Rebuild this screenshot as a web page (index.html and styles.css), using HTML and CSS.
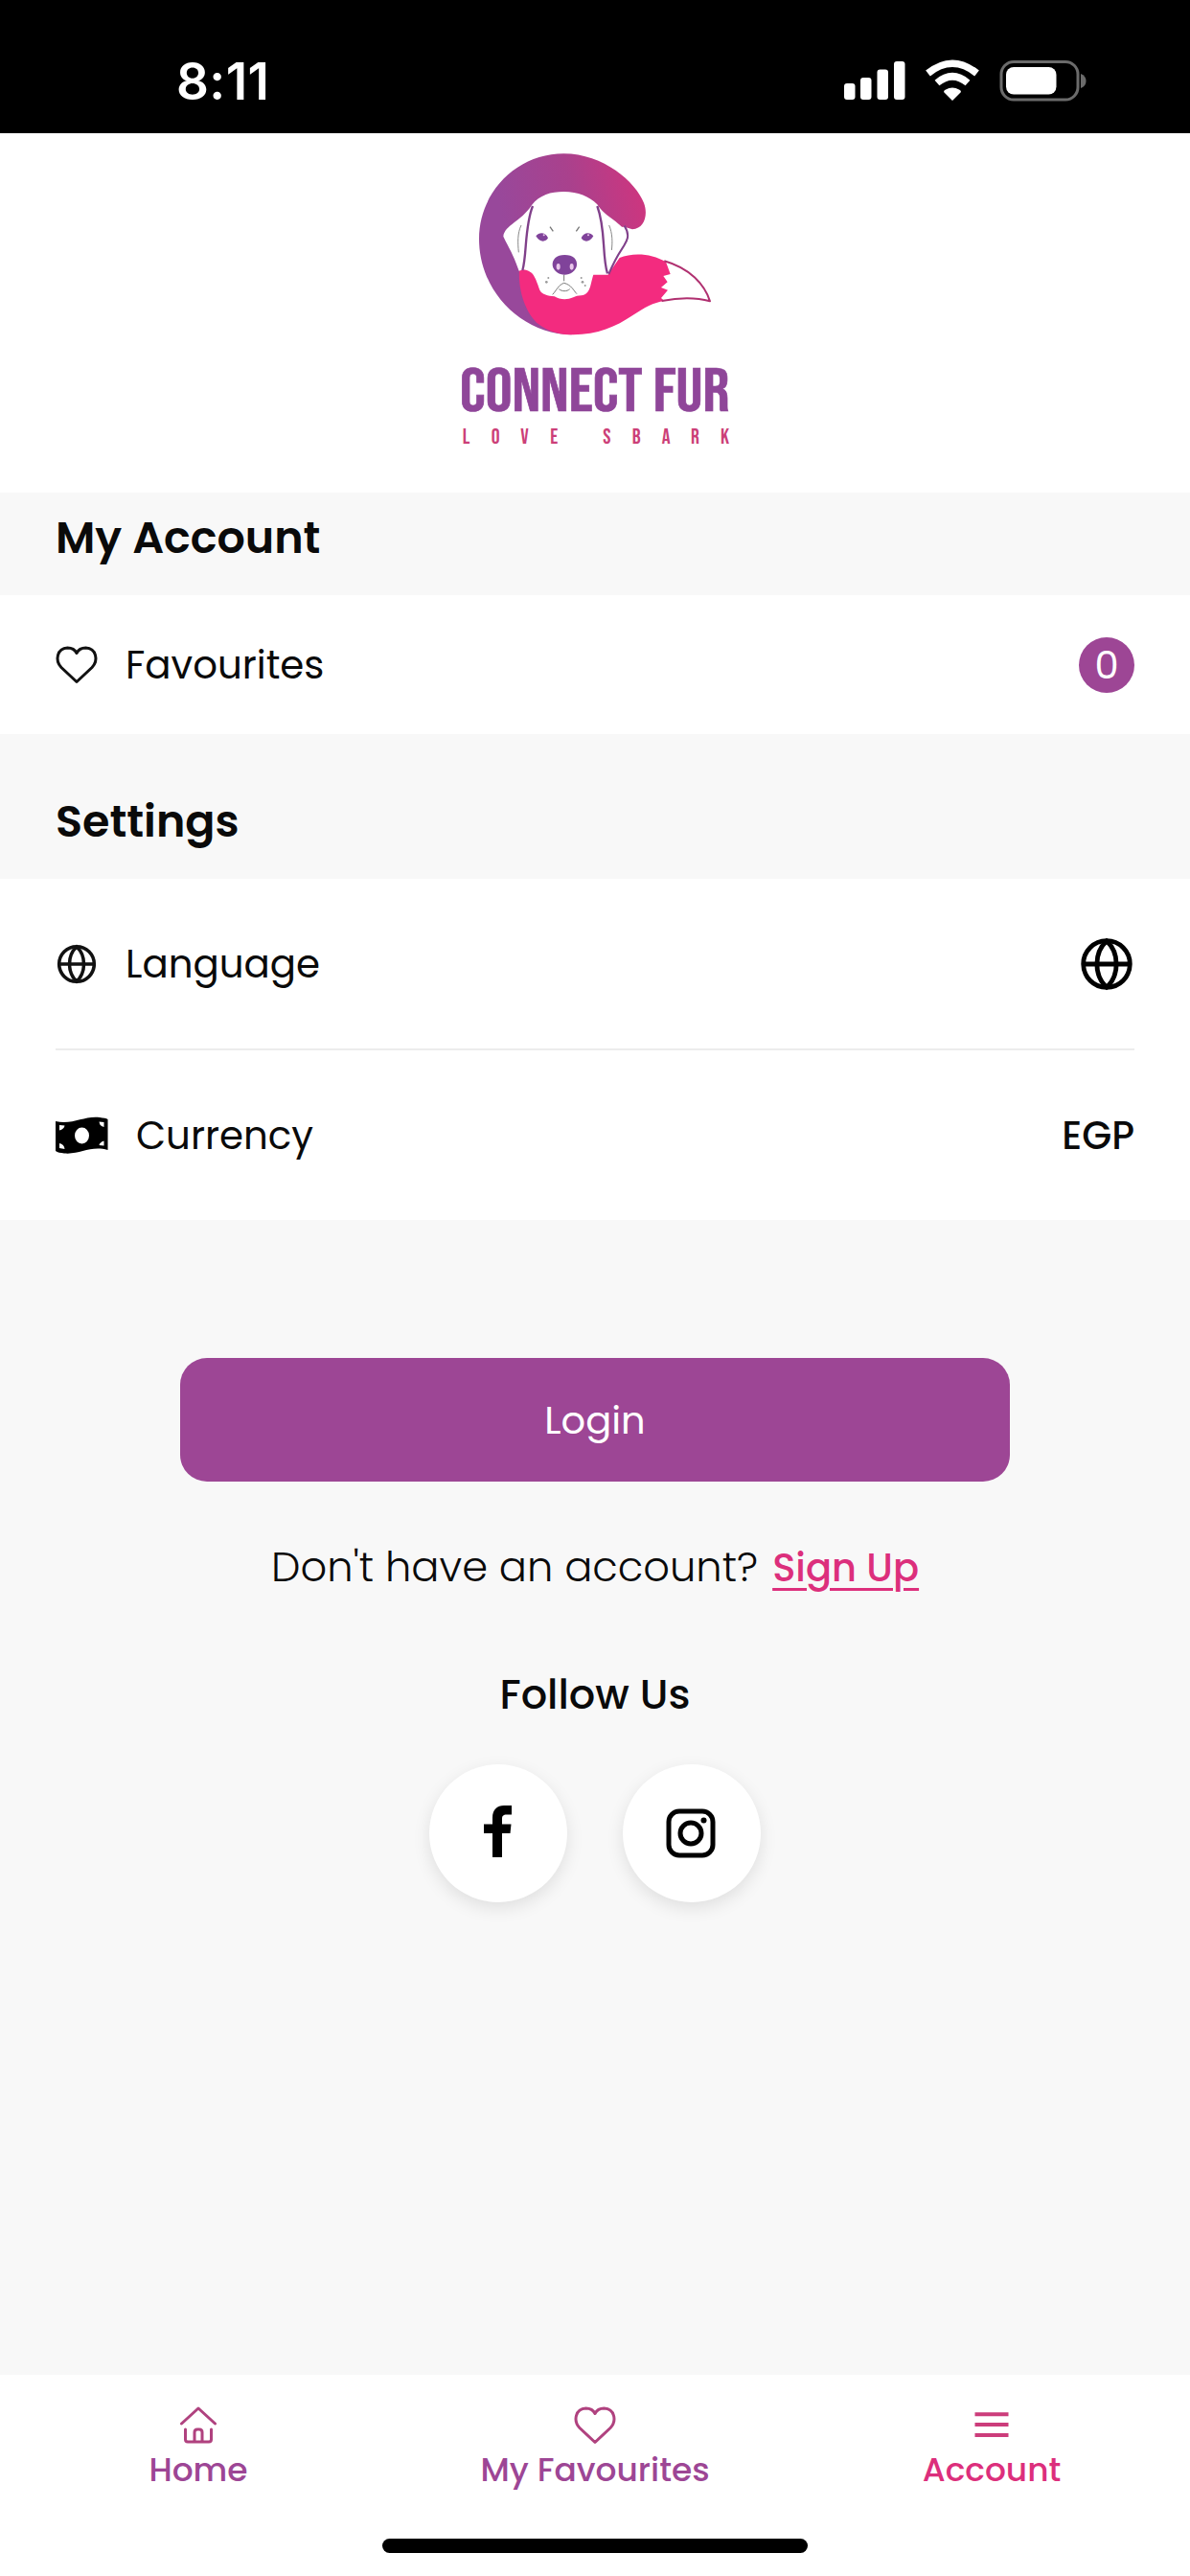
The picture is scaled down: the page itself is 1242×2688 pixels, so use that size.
FILE: index.html
```html
<!DOCTYPE html>
<html lang="en">
<head>
    <meta charset="UTF-8">
    <meta name="viewport" content="width=device-width, initial-scale=1.0">
    <title>Connect Fur</title>
    <link rel="stylesheet" href="styles.css">
</head>
<body>

    <div class="status-bar">
        <span class="time">8:11</span>
        <svg class="status-icons" viewBox="0 0 256 44" width="256" height="44">
            <g fill="#fff">
                <rect x="0" y="24" width="11.500" height="17" rx="3"/>
                <rect x="17" y="18" width="11.500" height="23" rx="3"/>
                <rect x="34.500" y="9.500" width="11.500" height="31.500" rx="3"/>
                <rect x="52" y="1" width="11.500" height="40" rx="3"/>
                <path d="M113 42 L104 33 Q104 31 106 30.500 Q113 26.500 120 30.500 Q122 31 122 33 Z"/>
            </g>
            <path d="M87.500 13.500 Q113 -7 138.500 13.500" fill="none" stroke="#fff" stroke-width="7.500"/>
            <path d="M97 23.500 Q113 10 129 23.500" fill="none" stroke="#fff" stroke-width="7.500"/>
            <rect x="164" y="1.500" width="80" height="39.500" rx="13" fill="none" stroke="#6b6b6b" stroke-width="3"/>
            <rect x="169" y="7" width="52.500" height="28.500" rx="8" fill="#fff"/>
            <path d="M247 14 Q252.500 16 252.500 21.500 Q252.500 27 247 29 Z" fill="#6b6b6b"/>
        </svg>
    </div>

    <div class="logo">
        <svg viewBox="0 0 960 1020" width="320" height="340">
            <defs>
                <linearGradient id="fur" gradientUnits="userSpaceOnUse" x1="200" y1="300" x2="650" y2="200">
                    <stop offset="0" stop-color="#98489b"/>
                    <stop offset="0.5" stop-color="#a9418d"/>
                    <stop offset="1" stop-color="#cf357e"/>
                </linearGradient>
            </defs>
            <path fill="url(#fur)" d="M600 298 C638 296 650 252 636 215 C610 150 510 61 385 61 C240 61 120 180 120 328 C120 490 250 625 410 628 L300 450 L300 300 L575 290 Z"/>
            <path fill="#f32b7f" d="M246 424 C242 500 270 560 300 590 C340 622 380 628 415 628 C490 628 550 602 600 568 C640 541 665 528 700 522 L690 513 L711 488 L690 480 L710 463 L697 444 L719 438 L705 400 C660 372 600 370 560 387 L530 430 L400 400 Z"/>
            <path d="M700 397 C780 420 826 470 843 523 C795 510 745 512 692 522" fill="none" stroke="#b03070" stroke-width="6" stroke-linejoin="round"/>
            <!-- dog face -->
            <path fill="#fff" d="M385 180 C430 180 465 195 490 220 C515 262 570 275 586 320 C583 350 545 380 524 440 L478 440 C468 470 470 500 440 505 C430 505 422 507 415 511 C395 520 372 518 356 508 C335 505 318 503 310 488 C295 445 290 428 258 424 L245 428 C228 378 210 350 196 320 C200 285 250 275 285 222 C310 190 345 180 385 180 Z"/>
            <g fill="none" stroke="#80408a" stroke-width="7">
                <path d="M575 287 C595 318 583 335 568 358 C550 385 540 405 526 438" stroke-width="6"/>
                <path d="M288 225 C262 290 270 380 256 426"/>
                <path d="M490 225 C518 300 504 380 522 436"/>
                <path d="M252 285 C240 310 241 340 244 370 M527 285 C538 310 538 340 535 363" stroke="#888" stroke-width="3"/>
                <path d="M342 290 L352 304 M434 290 L424 304" stroke="#777" stroke-width="4"/>
                <path d="M386 440 L386 460 M386 466 C368 472 362 490 350 502 M386 466 C410 472 416 490 426 500 M370 485 C380 493 395 493 404 485" stroke="#777" stroke-width="3"/>
            </g>
            <g fill="#80439a">
                <path d="M298 319 C308 306 328 306 336 325 C328 340 308 338 298 319 Z"/>
                <path d="M478 319 C468 306 448 306 440 325 C448 340 468 338 478 319 Z"/>
                <path d="M388 378 C415 378 428 392 426 410 C424 428 405 440 388 440 C371 440 352 428 350 410 C349 392 362 378 388 378 Z"/>
            </g>
            <g fill="#e9c6ea">
                <ellipse cx="368" cy="415" rx="6" ry="10"/>
                <ellipse cx="410" cy="415" rx="6" ry="10"/>
                <circle cx="323" cy="316" r="3"/>
                <circle cx="462" cy="316" r="3"/>
            </g>
            <g fill="#999">
                <circle cx="337" cy="450" r="3"/><circle cx="331" cy="463" r="4"/>
                <circle cx="440" cy="450" r="3"/><circle cx="444" cy="463" r="4"/><circle cx="452" cy="474" r="3"/>
            </g>
            <text class="brand" x="60" y="866" textLength="844" lengthAdjust="spacingAndGlyphs">CONNECT FUR</text>
            <text class="tagline" y="970" x="68 158 250 343 508 599 692 783 876">LOVESBARK</text>
        </svg>
    </div>

    <h2 class="section-title account-title">My Account</h2>
    <div class="row row-favourites">
        <svg class="icon" viewBox="0 0 44 40" width="44" height="40">
            <path d="M22 37.500 L6 22.500 C-1 15 1.500 2.500 12.500 2 C17 2 20.500 4.500 22 7.500 C23.500 4.500 27 2 31.500 2 C42.500 2.500 45 15 38 22.500 Z" fill="none" stroke="#111" stroke-width="3" stroke-linejoin="round"/>
        </svg>
        <span class="label">Favourites</span>
        <span class="badge">0</span>
    </div>

    <h2 class="section-title settings-title">Settings</h2>
    <div class="settings">
        <div class="row row-language">
            <svg class="icon" viewBox="0 0 44 44" width="44" height="44">
                <g fill="none" stroke="#111" stroke-width="3.600">
                    <circle cx="22" cy="22" r="18.300"/>
                    <path d="M4 22 H40 M22 4 C12 13 12 31 22 40 C32 31 32 13 22 4 Z"/>
                </g>
            </svg>
            <span class="label">Language</span>
            <svg class="globe" viewBox="0 0 54 54" width="54" height="54">
                <g fill="none" stroke="#000" stroke-width="4.800">
                    <circle cx="27" cy="27" r="24.300"/>
                    <path d="M3 27 H51 M27 3 C13.500 15 13.500 39 27 51 C40.500 39 40.500 15 27 3 Z"/>
                </g>
            </svg>
        </div>
        <div class="row row-currency">
            <svg class="icon" viewBox="0 0 55 40" width="55" height="40">
                <path d="M0 5 C18 9 30 -1 46 1 C50 1.500 53 2 54.500 3 V35 C36 30 26 40 9 38.500 C5 38 2 37.500 0 36 Z" fill="#000"/>
                <ellipse cx="27.500" cy="20" rx="7.500" ry="8.500" fill="#fff"/>
                <path d="M4 9 L9.500 9.500 Q9 13 4 14.500 Z M4 28 Q9 29 9.500 34 L4 33 Z M50.500 11 Q46 10 45.500 5.500 L50.500 6 Z M50.500 30.500 L45.500 30 Q46 27 50.500 25.500 Z" fill="#fff"/>
            </svg>
            <span class="label">Currency</span>
            <span class="currency-value">EGP</span>
        </div>
    </div>

    <div class="auth">
        <button class="login-button">Login</button>
        <p class="signup">Don't have an account?<a href="#" class="signup-link">Sign Up</a></p>
        <h3 class="follow-title">Follow Us</h3>
        <div class="socials">
            <a href="#" class="social">
                <svg viewBox="0 0 144 144" width="144" height="144">
                    <path d="M66 97 V72 H57 V62.500 H66 V56 C66 47 71 43 78 43 H86 V52.500 H81 C77 52.500 76 54 76 57 V62.500 H85.500 L84.500 72 H76 V97 Z" fill="#000"/>
                </svg>
            </a>
            <a href="#" class="social">
                <svg viewBox="0 0 144 144" width="144" height="144">
                    <g fill="none" stroke="#000" stroke-width="5">
                        <rect x="48" y="49" width="46" height="46" rx="11"/>
                        <circle cx="71" cy="72" r="11"/>
                    </g>
                    <circle cx="84.500" cy="58.500" r="3" fill="#000"/>
                </svg>
            </a>
        </div>
    </div>

    <div class="bottom-nav">
        <a href="#" class="nav-item">
            <svg viewBox="0 0 44 44" width="44" height="44">
                <path d="M4.500 21 L22 5 L39.500 21 M8.500 27 V37.500 Q8.500 40 11 40 H33 Q35.500 40 35.500 37.500 V27 M18 40 V30 Q18 27 21 27 H23 Q26 27 26 30 V40" fill="none" stroke="#b0427f" stroke-width="3" stroke-linecap="round" stroke-linejoin="round"/>
            </svg>
            Home
        </a>
        <a href="#" class="nav-item">
            <svg viewBox="0 0 44 44" width="44" height="44">
                <path d="M22 40.500 L6 25.500 C-1 18 1.500 5.500 12.500 5 C17 5 20.500 7.500 22 10.500 C23.500 7.500 27 5 31.500 5 C42.500 5.500 45 18 38 25.500 Z" fill="none" stroke="#b0427f" stroke-width="3" stroke-linejoin="round"/>
            </svg>
            My Favourites
        </a>
        <a href="#" class="nav-item active">
            <svg viewBox="0 0 44 44" width="44" height="44">
                <path d="M4.500 11.300 H39.500 M4.500 22 H39.500 M4.500 33 H39.500" fill="none" stroke="#cc3d7b" stroke-width="4"/>
            </svg>
            Account
        </a>
    </div>
    <div class="home-area">
        <div class="home-indicator"></div>
    </div>

</body>
</html>
```
FILE: styles.css
```css
* {
    box-sizing: border-box;
}

body {
    display: flex;
    flex-direction: column;
    height: 2688px;
    margin: 0;
    font-family: 'Poppins', 'Inter', sans-serif;
    background-color: #f8f8f8;
    color: #0a0a0a;
}

a {
    text-decoration: none;
}

svg {
    display: block;
    flex-shrink: 0;
    overflow: visible;
}

.status-bar {
    display: flex;
    justify-content: space-between;
    height: 139px;
    padding: 63px 105px 0 184px;
    background-color: #000;
    color: #fff;
}

.time {
    font-family: 'Inter', sans-serif;
    font-size: 53px;
    font-weight: 600;
    line-height: 44px;
    letter-spacing: 0.4px;
}

.logo {
    display: flex;
    height: 375px;
    padding: 1px 0 0 460px;
    background-color: #fff;
}

.brand {
    font-family: 'Bebas Neue', 'Roboto', sans-serif;
    font-size: 193px;
    font-weight: 400;
    fill: #8f4699;
    stroke: #8f4699;
    stroke-width: 2px;
}

.tagline {
    font-family: 'Bebas Neue', 'Roboto', sans-serif;
    font-size: 66px;
    fill: #cc3f78;
}

.section-title {
    margin: 0;
    padding-left: 58px;
    font-size: 46px;
    font-weight: 600;
    line-height: 54px;
}

.account-title {
    height: 107px;
    padding-top: 20px;
}

.settings-title {
    height: 151px;
    padding-top: 64px;
}

.row {
    display: flex;
    align-items: center;
    background-color: #fff;
    padding: 0 58px;
    font-size: 40px;
}

.row-favourites {
    height: 145px;
}

.settings {
    height: 356px;
    background-color: #fff;
}

.row-language {
    height: 179px;
    margin: 0 58px;
    padding: 0;
    border-bottom: 2px solid #ececec;
}

.row-currency {
    height: 177px;
}

.label {
    flex: 1;
    margin-left: 29px;
    font-size: 40.3px;
}

.badge {
    width: 58px;
    height: 58px;
    border-radius: 50%;
    background-color: #9d4695;
    color: #fff;
    line-height: 58px;
    text-align: center;
}

.globe {
    margin-right: 2px;
}

.currency-value {
    font-weight: 500;
}

.auth {
    display: flex;
    flex: 1;
    flex-direction: column;
    align-items: center;
    padding-top: 144px;
}

.login-button {
    width: 866px;
    height: 129px;
    border: none;
    border-radius: 28px;
    background-color: #9d4695;
    color: #fff;
    font-family: inherit;
    font-size: 40px;
    font-weight: 400;
}

.signup {
    display: flex;
    align-items: baseline;
    gap: 15px;
    margin: 64px 0 0;
    font-size: 43.2px;
    font-weight: 300;
    line-height: 50px;
}

.signup-link {
    color: #dc2f7c;
    font-size: 40px;
    font-weight: 500;
    text-decoration: underline;
    text-decoration-thickness: 3px;
    text-underline-offset: 7px;
}

.follow-title {
    margin: 82px 0 0;
    font-size: 43px;
    font-weight: 500;
    line-height: 50px;
}

.socials {
    display: flex;
    gap: 58px;
    margin-top: 48px;
}

.social {
    width: 144px;
    height: 144px;
    border-radius: 50%;
    background-color: #fff;
    box-shadow: 0 6px 18px rgba(0, 0, 0, 0.1);
}

.bottom-nav {
    display: flex;
    height: 171px;
    padding-top: 30px;
    background-color: #fff;
}

.nav-item {
    display: flex;
    flex: 1;
    flex-direction: column;
    align-items: center;
    gap: 5px;
    color: #9d4695;
    font-size: 34.4px;
    font-weight: 500;
    line-height: 40px;
}

.nav-item.active {
    color: #dc2f7c;
}

.home-area {
    display: flex;
    justify-content: center;
    height: 39px;
    background-color: #fff;
}

.home-indicator {
    width: 444px;
    height: 15px;
    border-radius: 8px;
    background-color: #000;
}
```
